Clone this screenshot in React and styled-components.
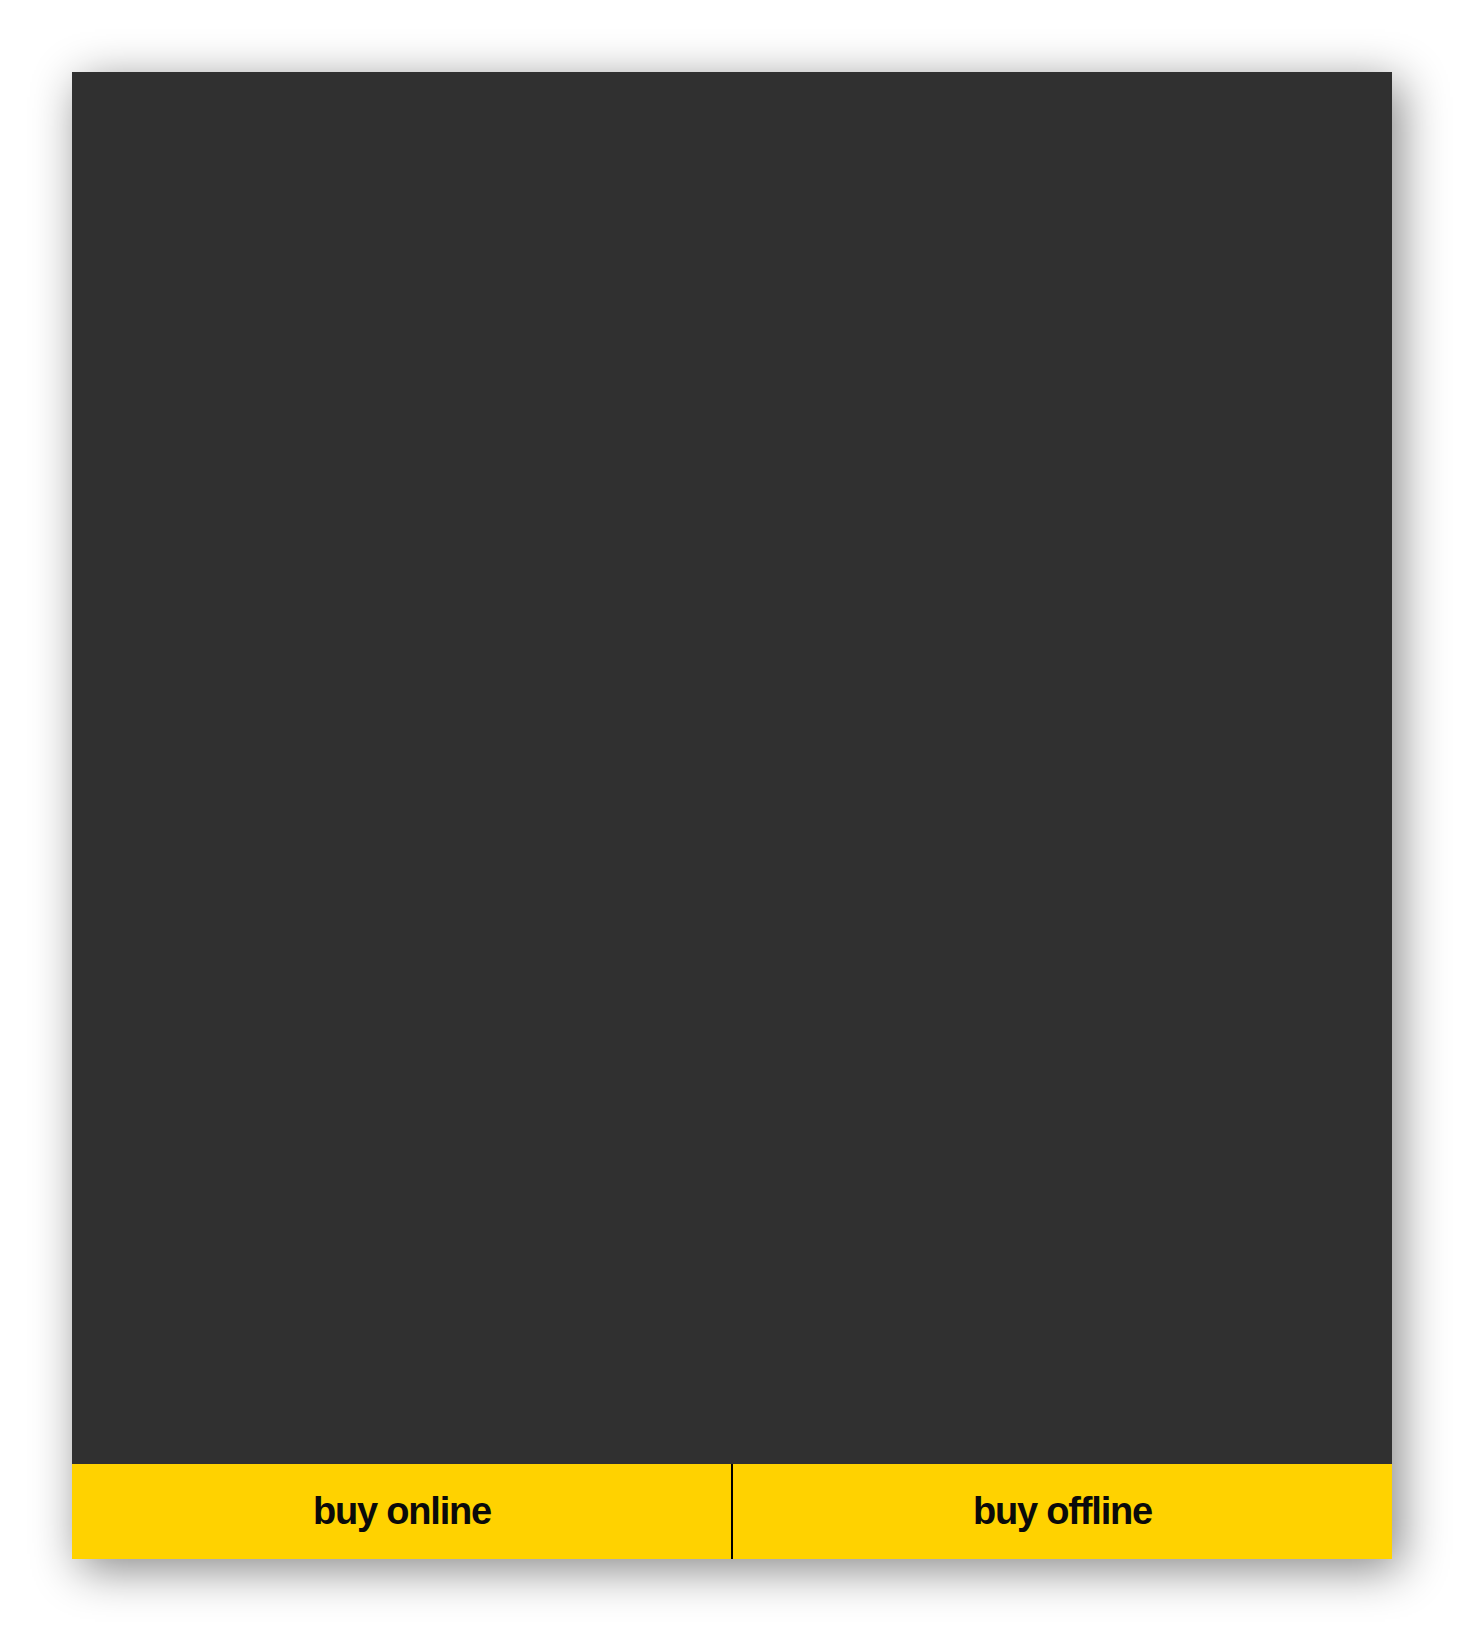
import styled, { createGlobalStyle } from "styled-components";

const GlobalStyle = createGlobalStyle`
  body {
    margin: 0;
    background: #ffffff;
    font-family: "Liberation Sans", Arial, sans-serif;
  }
`;

function App() {
  return (
    <>
      <GlobalStyle />
      <Page>
        <Card>
          <Screen />
          <Actions>
            <BuyButton>buy online</BuyButton>
            <BuyButton divided>buy offline</BuyButton>
          </Actions>
        </Card>
      </Page>
    </>
  );
}

const Page = styled.div`
  padding: 72px 0 92px 72px;
`;

const Card = styled.div`
  width: 1320px;
  display: flex;
  flex-direction: column;
  box-shadow: 8px 10px 44px rgba(0, 0, 0, 0.48);
`;

const Screen = styled.div`
  height: 1392px;
  background: #303030;
`;

const Actions = styled.div`
  display: grid;
  grid-template-columns: 1fr 1fr;
  height: 95px;
  background: #ffd200;
`;

const BuyButton = styled.div`
  display: flex;
  align-items: center;
  justify-content: center;
  border-left: ${(p) => (p.divided ? "2px solid #000" : "none")};
  margin-left: ${(p) => (p.divided ? "-1px" : "0")};
  font-size: 38px;
  font-weight: 700;
  letter-spacing: -1.2px;
  color: #0a0a0a;
`;

export default App;
